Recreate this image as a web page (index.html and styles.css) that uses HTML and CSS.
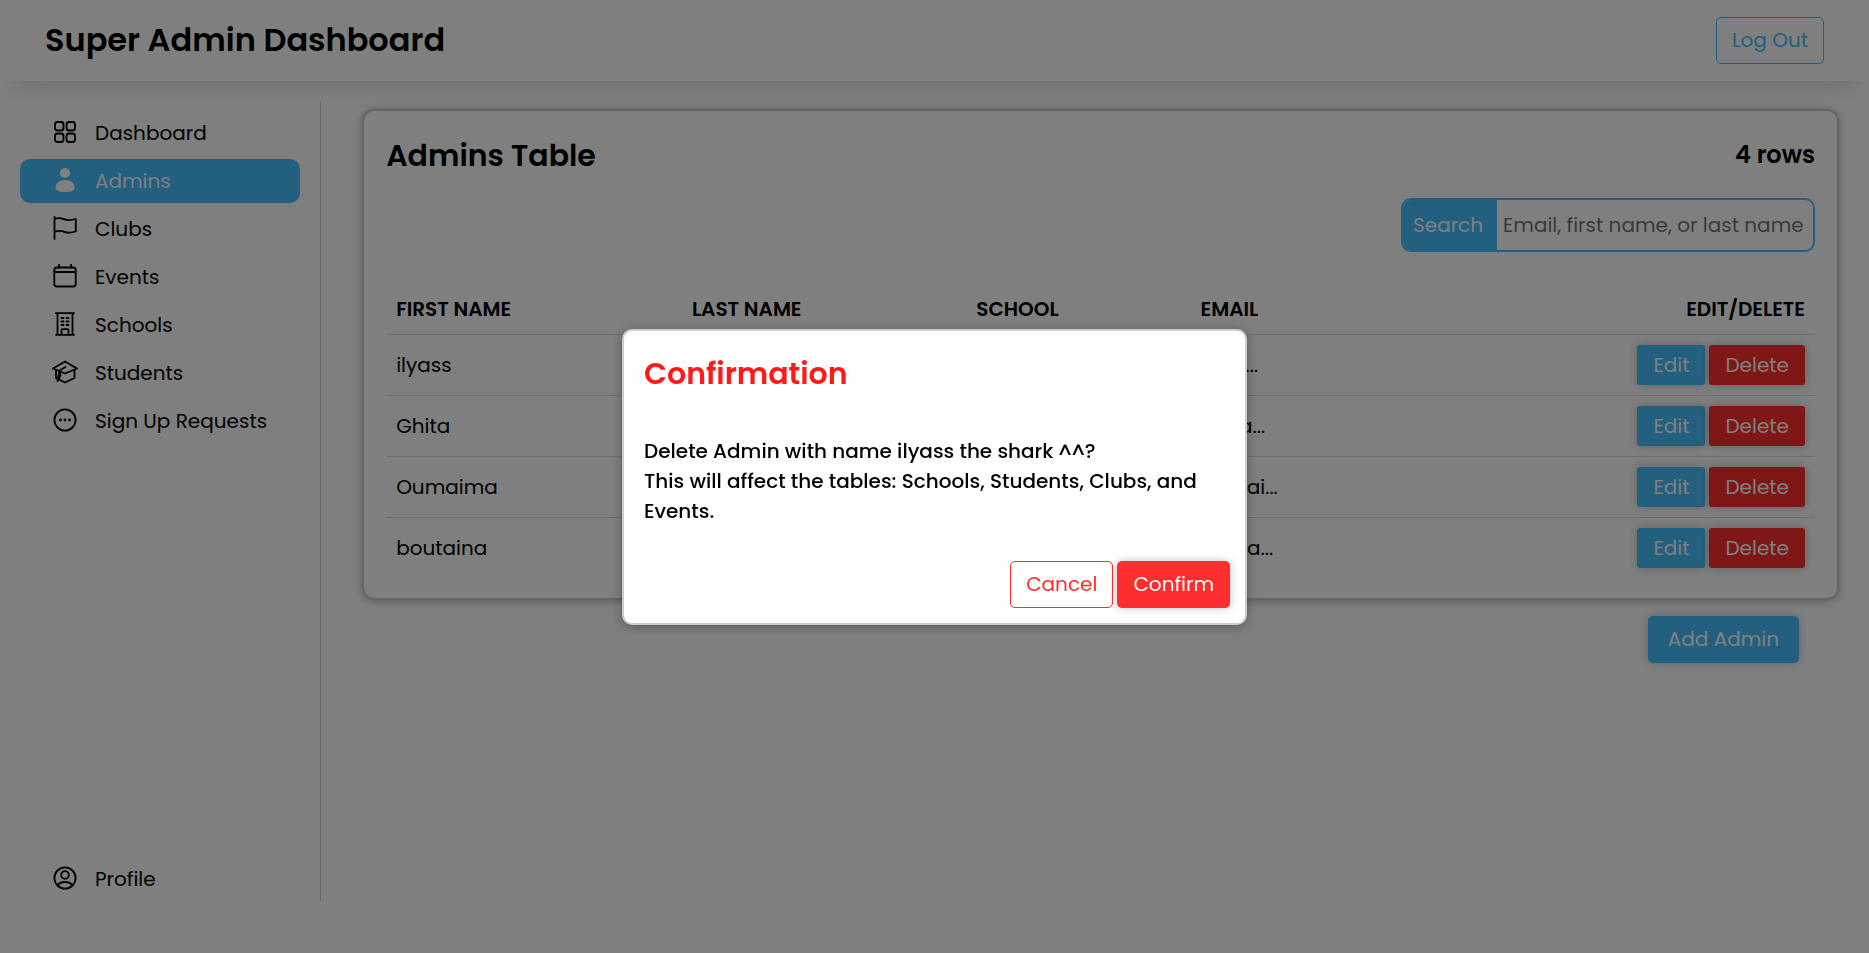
FILE: index.html
```html
<!DOCTYPE html>
<html lang="en">
<head>
<meta charset="utf-8">
<title>Super Admin Dashboard</title>
<link rel="stylesheet" href="styles.css">
</head>
<body>
<header class="topbar">
  <h1 class="topbar-title">Super Admin Dashboard</h1>
  <button class="btn btn-outline-blue" type="button">Log Out</button>
</header>
<div class="layout">
  <nav class="sidebar" aria-label="Main">
    <a class="nav-link" href="#">
      <svg class="icon" viewBox="0 0 24 24" aria-hidden="true"><rect x="2" y="2" width="8.500" height="8.500" rx="2.5"/><rect x="13.500" y="2" width="8.500" height="8.500" rx="2.5"/><rect x="2" y="13.500" width="8.500" height="8.500" rx="2.5"/><rect x="13.500" y="13.500" width="8.500" height="8.500" rx="2.5"/></svg>
      <span>Dashboard</span></a>
    <a class="nav-link nav-link-active" href="#" aria-current="page">
      <svg class="icon icon-solid" viewBox="0 0 24 24" aria-hidden="true"><circle cx="12" cy="5" r="5"/><path d="M2.500 20C2.500 15.500 6 12 12 12s9.500 3.500 9.500 8c0 2.500-4 4-9.500 4s-9.500-1.500-9.500-4z"/></svg>
      <span>Admins</span></a>
    <a class="nav-link" href="#">
      <svg class="icon" viewBox="0 0 24 24" aria-hidden="true"><path d="M1.500 1v22M1.500 3c3.500-1.500 6.500-1 10 .3 4 1.500 7 1 11.300-.3v12.500c-4 1.300-7.300 1.700-11.300.3-3.500-1.300-6.500-1.300-10 0"/></svg>
      <span>Clubs</span></a>
    <a class="nav-link" href="#">
      <svg class="icon" viewBox="0 0 24 24" aria-hidden="true"><rect x="1.300" y="3.500" width="21.400" height="19" rx="2.500"/><path d="M1.300 8h21.400M6 .8v2.700M18 .8v2.700"/></svg>
      <span>Events</span></a>
    <a class="nav-link" href="#">
      <svg class="icon" viewBox="0 0 24 24" aria-hidden="true"><path d="M3 1.200h18M3 22.800h18M4.500 1.200v21.600M19.500 1.200v21.600M8.500 22.800v-4.600q0-1 1-1h5q1 0 1 1v4.600M8.500 6h2M13.500 6h2M8.500 9.500h2M13.500 9.500h2M8.500 13h2M13.500 13h2"/></svg>
      <span>Schools</span></a>
    <a class="nav-link" href="#">
      <svg class="icon icon-wide" viewBox="0 0 24 24" aria-hidden="true"><path d="M0 8.500L12 1.500l12 7-12 5zM3 10.500v7.500l9 4.500 9.500-4.500v-8M12.500 7L6.500 10.500 4.500 21M6.500 11l1 4-1.500 4"/></svg>
      <span>Students</span></a>
    <a class="nav-link" href="#">
      <svg class="icon" viewBox="0 0 24 24" aria-hidden="true"><circle cx="12" cy="12" r="10.600"/><g class="dots"><circle cx="7.500" cy="12" r="1.400"/><circle cx="12" cy="12" r="1.400"/><circle cx="16.500" cy="12" r="1.400"/></g></svg>
      <span>Sign Up Requests</span></a>
    <a class="nav-link nav-link-bottom" href="#">
      <svg class="icon" viewBox="0 0 24 24" aria-hidden="true"><circle cx="12" cy="12" r="10.600"/><circle cx="12" cy="9" r="3.800"/><path d="M4.500 19.500c1.500-2.500 4.500-3.500 7.500-3.500s6 1 7.500 3.500"/></svg>
      <span>Profile</span></a>
  </nav>
  <main class="content">
    <section class="card">
      <div class="card-head">
        <h2 class="card-title">Admins Table</h2>
        <p class="row-count">4 rows</p>
      </div>
      <form class="search">
        <label class="search-label" for="search">Search</label>
        <input class="search-input" id="search" type="text" placeholder="Email, first name, or last name">
      </form>
      <table class="table">
        <colgroup><col class="col-first"><col class="col-last"><col class="col-school"><col class="col-email"><col></colgroup>
        <thead>
          <tr><th>First Name</th><th>Last Name</th><th>School</th><th>Email</th><th class="actions">Edit/Delete</th></tr>
        </thead>
        <tbody>
          <tr><td>ilyass</td><td></td><td></td><td>ilyas...</td><td class="actions"><div class="pair"><button class="btn btn-small btn-blue" type="button">Edit</button><button class="btn btn-small btn-red" type="button">Delete</button></div></td></tr>
          <tr><td>Ghita</td><td></td><td></td><td>ghita...</td><td class="actions"><div class="pair"><button class="btn btn-small btn-blue" type="button">Edit</button><button class="btn btn-small btn-red" type="button">Delete</button></div></td></tr>
          <tr><td>Oumaima</td><td></td><td></td><td>oumai...</td><td class="actions"><div class="pair"><button class="btn btn-small btn-blue" type="button">Edit</button><button class="btn btn-small btn-red" type="button">Delete</button></div></td></tr>
          <tr><td>boutaina</td><td></td><td></td><td>bouta...</td><td class="actions"><div class="pair"><button class="btn btn-small btn-blue" type="button">Edit</button><button class="btn btn-small btn-red" type="button">Delete</button></div></td></tr>
        </tbody>
      </table>
    </section>
    <button class="btn btn-blue btn-add" type="button">Add Admin</button>
  </main>
</div>
<div class="overlay">
  <div class="modal" role="dialog" aria-modal="true" aria-labelledby="modal-title">
    <h2 class="modal-title" id="modal-title">Confirmation</h2>
    <p class="modal-text">Delete Admin with name ilyass the shark ^^?<br>This will affect the tables: Schools, Students, Clubs, and Events.</p>
    <div class="modal-actions">
      <button class="btn btn-outline-red" type="button">Cancel</button>
      <button class="btn btn-red" type="button">Confirm</button>
    </div>
  </div>
</div>
</body>
</html>
```
FILE: styles.css
```css
:root {
  --blue: #47c0ff;
  --red: #ff2e2e;
  --line: #ddd;
}

* {
  box-sizing: border-box;
}

body {
  margin: 0;
  background: #fff;
  color: #000;
  font-family: Poppins, Inter, sans-serif;
  font-size: 20px;
  line-height: 30px;
}

h1, h2, p {
  margin: 0;
}

.topbar {
  display: flex;
  align-items: center;
  justify-content: space-between;
  padding: 17px 45px;
  box-shadow: 0 16px 24px -12px rgba(0, 0, 0, 0.12);
}

.topbar-title {
  padding-bottom: 2px;
  font-size: 32px;
  font-weight: 600;
  line-height: 45px;
}

.btn {
  border: 1px solid transparent;
  border-radius: 5px;
  padding: 8px 15px;
  background: #fff;
  color: #fff;
  font: inherit;
  line-height: 29px;
  white-space: nowrap;
}

.btn-outline-blue {
  border-color: var(--blue);
  color: var(--blue);
}

.btn-outline-red {
  border-color: var(--red);
  color: var(--red);
}

.btn-blue {
  background: var(--blue);
  box-shadow: 0 0 8px rgba(0, 0, 0, 0.25);
}

.btn-red {
  background: var(--red);
  box-shadow: 0 0 8px rgba(0, 0, 0, 0.25);
}

.btn-small {
  border-radius: 3px;
  padding: 4px 15px;
  line-height: 30px;
}

.layout {
  display: flex;
  margin-top: 20px;
}

.sidebar {
  display: flex;
  flex-direction: column;
  gap: 4px;
  flex: 0 0 320px;
  min-height: 800px;
  padding: 10px 20px 0;
  border-right: 1px solid #d2d2d2;
}

.nav-link {
  display: flex;
  align-items: center;
  gap: 18px;
  padding: 7px 33px;
  border-radius: 10px;
  color: #000;
  text-decoration: none;
  white-space: nowrap;
}

.nav-link-active {
  background: var(--blue);
  color: #fff;
}

.nav-link-bottom {
  margin-top: auto;
}

.icon {
  flex: none;
  width: 24px;
  height: 24px;
  margin-bottom: 2px;
  fill: none;
  stroke: currentColor;
  stroke-width: 1.8;
  stroke-linecap: round;
  stroke-linejoin: round;
}

.icon-wide {
  overflow: visible;
}

.icon-solid, .dots {
  fill: currentColor;
  stroke: none;
}

.content {
  display: flex;
  flex-direction: column;
  flex: 1;
  padding: 8px 30px 0 41px;
}

.card {
  padding: 22px 22px 20px;
  border: 2px solid #ccc;
  border-radius: 12px;
  box-shadow: 0 1px 8px rgba(0, 0, 0, 0.3);
}

.card-head {
  display: flex;
  justify-content: space-between;
}

.card-title {
  font-size: 30px;
  font-weight: 600;
  line-height: 46px;
}

.row-count {
  font-size: 24px;
  font-weight: 600;
  line-height: 44px;
}

.search {
  display: flex;
  width: 414px;
  height: 54px;
  margin: 19px 0 32px auto;
  border: 2px solid var(--blue);
  border-radius: 10px;
  overflow: hidden;
}

.search-label {
  padding: 10px 14px 10px 10px;
  background: var(--blue);
  color: #fff;
}

.search-input {
  flex: 1;
  min-width: 0;
  border: 0;
  padding: 0 6px;
  background: none;
  font: inherit;
}

.table {
  width: 100%;
  border-collapse: collapse;
  table-layout: fixed;
}

.col-first {
  width: 20.7%;
}

.col-last {
  width: 19.9%;
}

.col-school {
  width: 15.7%;
}

.col-email {
  width: 15%;
}

.table th {
  padding: 10px;
  font-weight: 600;
  text-align: left;
  text-transform: uppercase;
}

.table td {
  padding: 10px;
}

.table tbody tr {
  border-top: 1px solid var(--line);
}

.table .actions {
  text-align: right;
}

.pair {
  display: flex;
  justify-content: flex-end;
  gap: 4px;
}

.btn-add {
  align-self: flex-end;
  margin: 16px 40px 0 0;
  padding: 8px 19px;
}

.overlay {
  position: fixed;
  inset: 0;
  display: flex;
  align-items: center;
  justify-content: center;
  background: rgba(0, 0, 0, 0.5);
}

.modal {
  width: 625px;
  padding: 20px 15px 15px 20px;
  border: 2px solid #ccc;
  border-radius: 10px;
  background: #fff;
  box-shadow: 0 2px 12px rgba(0, 0, 0, 0.3);
}

.modal-title {
  color: #ff1a1a;
  font-size: 30px;
  font-weight: 600;
  line-height: 46px;
}

.modal-text {
  margin: 39px 0 35px;
  font-weight: 500;
}

.modal-actions {
  display: flex;
  justify-content: flex-end;
  gap: 4px;
}
```
